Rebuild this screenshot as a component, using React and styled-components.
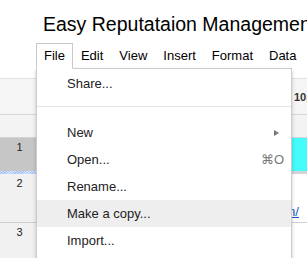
import styled, { createGlobalStyle } from "styled-components";

const GlobalStyle = createGlobalStyle`
  html,
  body {
    margin: 0;
    padding: 0;
    background: #fff;
    overflow: hidden;
  }
  body {
    font-family: "Liberation Sans", Arial, sans-serif;
    color: #000;
  }
`;

const Page = styled.div`
  position: relative;
  width: 307px;
  height: 258px;
  overflow: hidden;
  white-space: nowrap;
`;

const TitleBar = styled.div`
  padding: 14px 0 0 43px;
`;

const Title = styled.div`
  font-size: 19.5px;
  line-height: 20px;
  color: #000;
`;

const MenuBar = styled.div`
  display: flex;
  height: 26px;
  margin: 9px 0 0 36px;
`;

const MenuButton = styled.div`
  position: relative;
  z-index: ${({ $open }) => ($open ? 3 : 0)};
  padding: 0 7px;
  border: 1px solid ${({ $open }) => ($open ? "#c9c9c9" : "transparent")};
  border-bottom-color: ${({ $open }) => ($open ? "#fff" : "transparent")};
  background: ${({ $open }) => ($open ? "#fff" : "transparent")};
  font-size: 13px;
  line-height: 24px;
  color: #000;
`;

const Toolbar = styled.div`
  display: flex;
  align-items: center;
  height: 35px;
  margin-top: 9px;
  border-top: 1px solid #e2e2e2;
  border-bottom: 1px solid #d6d6d6;
  background: #f5f5f5;
`;

const FontSize = styled.span`
  margin-left: 294px;
  font-size: 11px;
  font-weight: bold;
  color: #333;
`;

const ColumnHeaders = styled.div`
  height: 22px;
  border-bottom: 1px solid #d4d4d4;
  background: #f3f3f3;
`;

const Row = styled.div`
  display: flex;
  height: ${({ $height }) => $height}px;
  border-bottom: ${({ $line }) => ($line ? "1px solid #cfcfcf" : "none")};
`;

const RowHeader = styled.div`
  flex: 0 0 40px;
  padding-top: 3px;
  box-sizing: border-box;
  border-right: 1px solid #cdcdcd;
  background: ${({ $selected }) => ($selected ? "#c6c6c6" : "#f1f1f1")};
  font-size: 11px;
  line-height: 13px;
  text-align: center;
  color: #222;
`;

const Cell = styled.div`
  display: flex;
  align-items: flex-end;
  justify-content: flex-end;
  flex: ${({ $width }) => ($width ? `0 0 ${$width}px` : "1")};
  padding: 0 8px 3px 0;
  background: ${({ $fill }) => $fill || "#fff"};
`;

const FreezeBar = styled.div`
  display: flex;
  height: 3px;
  background: #d4d4d4;
`;

const FreezeHandle = styled.div`
  flex: 0 0 40px;
  background: repeating-linear-gradient(
    135deg,
    #a9c3f5 0,
    #a9c3f5 1px,
    #d8e4fb 1px,
    #d8e4fb 2px
  );
`;

const Link = styled.a`
  font-size: 13px;
  line-height: 15px;
  color: #1155cc;
  text-decoration: underline;
`;

const Dropdown = styled.div`
  position: absolute;
  z-index: 2;
  top: 68px;
  left: 36px;
  width: 256px;
  box-sizing: border-box;
  padding: 1px 0 6px;
  background: #fff;
  border: 1px solid rgba(0, 0, 0, 0.2);
  box-shadow: 0 2px 4px rgba(0, 0, 0, 0.2);
`;

const MenuItem = styled.div`
  display: flex;
  align-items: center;
  height: 27px;
  padding: 0 7px 0 30px;
  font-size: 13px;
  color: #222;
  background: ${({ $active }) => ($active ? "#eeeeee" : "transparent")};
`;

const Separator = styled.div`
  height: 1px;
  margin: 9px 0 12px;
  background: #e5e5e5;
`;

const Shortcut = styled.span`
  margin-left: auto;
  color: #777;
`;

const SubmenuArrow = styled.span`
  margin-left: auto;
  margin-right: 5px;
  width: 0;
  height: 0;
  border-left: 5px solid #777;
  border-top: 3px solid transparent;
  border-bottom: 3px solid transparent;
`;

const menus = ["File", "Edit", "View", "Insert", "Format", "Data", "Tools", "Help"];

const fileItems = [
  { label: "Share..." },
  { separator: true },
  { label: "New", submenu: true },
  { label: "Open...", shortcut: "⌘O" },
  { label: "Rename..." },
  { label: "Make a copy...", active: true },
  { label: "Import..." },
  { separator: true },
  { label: "Download as", submenu: true },
];

const App = () => (
  <Page>
    <GlobalStyle />
    <TitleBar>
      <Title>Easy Reputataion Management</Title>
    </TitleBar>
    <MenuBar>
      {menus.map((name) => (
        <MenuButton key={name} $open={name === "File"}>
          {name}
        </MenuButton>
      ))}
    </MenuBar>
    <Toolbar>
      <FontSize>10pt</FontSize>
    </Toolbar>
    <ColumnHeaders />
    <Row $height={33}>
      <RowHeader $selected>1</RowHeader>
      <Cell />
      <Cell $width={157} $fill="#45fbfc" />
    </Row>
    <FreezeBar>
      <FreezeHandle />
    </FreezeBar>
    <Row $height={48} $line>
      <RowHeader>2</RowHeader>
      <Cell>
        <Link href="#">http://www.easyreputation.com/</Link>
      </Cell>
    </Row>
    <Row $height={60}>
      <RowHeader>3</RowHeader>
      <Cell />
    </Row>

    <Dropdown>
      {fileItems.map((item, i) =>
        item.separator ? (
          <Separator key={i} />
        ) : (
          <MenuItem key={i} $active={item.active}>
            {item.label}
            {item.shortcut && <Shortcut>{item.shortcut}</Shortcut>}
            {item.submenu && <SubmenuArrow />}
          </MenuItem>
        )
      )}
    </Dropdown>
  </Page>
);

export default App;
